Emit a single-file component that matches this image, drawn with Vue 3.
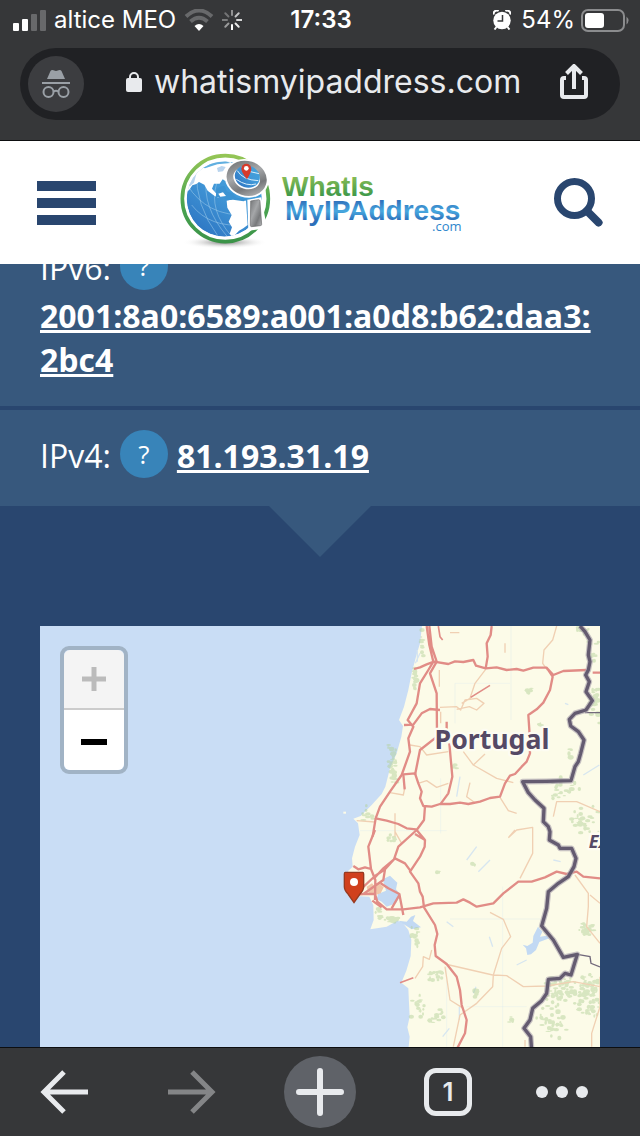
<script setup>
import { ref } from 'vue'

const address = ref('whatismyipaddress.com')

// Woodland areas: centre x, centre y, spread x, spread y, number of patches
const woods = [
  [225, 170, 8, 50, 14], [158, 430, 16, 60, 34], [568, 212, 10, 10, 8], [85, 580, 22, 25, 10],
  [245, 70, 8, 50, 10], [345, 435, 8, 14, 4], [155, 665, 14, 30, 9], [115, 880, 14, 22, 10],
  [155, 900, 30, 10, 14], [225, 950, 18, 35, 14], [290, 1070, 26, 22, 16], [235, 1160, 22, 45, 18],
  [290, 1190, 26, 30, 14], [405, 1120, 14, 16, 8], [740, 925, 26, 30, 24], [660, 1115, 55, 45, 60],
  [740, 1125, 45, 75, 70], [640, 1210, 55, 50, 36], [765, 240, 22, 80, 26], [665, 510, 65, 40, 24],
  [735, 600, 45, 45, 30], [760, 90, 20, 50, 10], [735, 30, 35, 12, 8], [400, 735, 8, 8, 3],
  [297, 755, 7, 9, 3], [600, 312, 10, 6, 3], [515, 1200, 8, 20, 4], [690, 400, 8, 20, 4],
]

let seed = 7
const rand = () => {
  seed = (seed * 16807) % 2147483647
  return seed / 2147483647
}
const patches = woods.flatMap(([x, y, sx, sy, n]) =>
  Array.from({ length: n }, () => ({
    x: Math.round(x + (rand() + rand() - 1) * sx),
    y: Math.round(y + (rand() + rand() - 1) * sy),
    rx: Math.round(3 + rand() * 6),
    ry: Math.round(2 + rand() * 5),
  }))
)

const spokes = [1, 0.5, 0.35, 0.3, 0.45, 0.7, 0.8, 0.9]
</script>

<template>
  <div class="phone">
    <header class="browser-top">
      <div class="status">
        <div class="status-left">
          <svg class="signal" viewBox="0 0 33 21" width="33" height="21" aria-hidden="true">
            <rect x="0" y="13" width="6" height="8" rx="1" fill="#fff" />
            <rect x="9" y="9" width="6" height="12" rx="1" fill="#fff" />
            <rect x="18" y="4" width="6" height="17" rx="1" fill="#68696b" />
            <rect x="27" y="0" width="6" height="21" rx="1" fill="#68696b" />
          </svg>
          <span class="carrier">altice MEO</span>
          <svg class="wifi" viewBox="0 0 30 22" width="30" height="22" fill="none" aria-hidden="true">
            <path d="M2 7.500Q15-4.500 28 7.500" stroke="#68696b" stroke-width="4" />
            <path d="M6.500 12.500Q15 5 23.500 12.500" stroke="#68696b" stroke-width="4" />
            <path d="M10.500 17Q15 13 19.500 17L15 22Z" fill="#fff" />
          </svg>
          <svg class="spinner" viewBox="-10 -10 20 20" width="20" height="20" aria-hidden="true">
            <line
              v-for="(o, i) in spokes" :key="i" x1="0" y1="5" x2="0" y2="9.500"
              stroke="#fff" stroke-width="2" stroke-linecap="round" :opacity="o" :transform="`rotate(${i * 45})`"
            />
          </svg>
        </div>
        <time class="clock">17:33</time>
        <div class="status-right">
          <svg viewBox="0 0 18 20" width="18" height="20" aria-hidden="true">
            <circle cx="9" cy="10.500" r="8.700" fill="#fff" />
            <path d="M.8 4.600A3.200 3.200 0 0 1 5.600 1M17.200 4.600A3.200 3.200 0 0 0 12.400 1M3.500 17 1.500 19.500M14.500 17l2 2.500" stroke="#fff" stroke-width="2" fill="none" />
            <path d="M9.500 5v6H4.500" stroke="#363739" stroke-width="1.500" fill="none" />
          </svg>
          <span class="percent">54%</span>
          <svg viewBox="0 0 48 23" width="48" height="23" aria-hidden="true">
            <rect x="1" y="1" width="42" height="21" rx="6" fill="none" stroke="#8b8c8e" stroke-width="2" />
            <rect x="4" y="4" width="19" height="15" rx="3" fill="#fff" />
            <path d="M45.500 7.500q4 4 0 8z" fill="#8b8c8e" />
          </svg>
        </div>
      </div>
      <div class="urlbar">
        <span class="incognito">
          <svg viewBox="0 0 28 28" width="28" height="28" aria-hidden="true">
            <path d="M5 9 8.500 1Q9 0 10.500 0L14 1 17.500 0Q19 0 19.500 1L23 9Z" fill="#9aa0a6" />
            <path d="M0 12h28v2H0z" fill="#9aa0a6" />
            <g fill="none" stroke="#9aa0a6" stroke-width="2">
              <circle cx="6.500" cy="22" r="5" /><circle cx="21.500" cy="22" r="5" /><path d="M11.500 21.500q2.500-1.500 5 0" />
            </g>
          </svg>
        </span>
        <svg class="lock" viewBox="0 0 16 20" width="16" height="20" aria-hidden="true">
          <rect y="6" width="16" height="14" rx="2" fill="#e8eaed" />
          <path d="M4 8V5a4 4 0 0 1 8 0v3" stroke="#e8eaed" stroke-width="2" fill="none" />
        </svg>
        <input v-model="address" class="address" type="text" aria-label="Address" />
        <button class="plain" type="button" aria-label="Share">
          <svg viewBox="0 0 28 36" width="28" height="36" fill="none" stroke="#e8eaed" stroke-width="4" aria-hidden="true">
            <path d="M6 14H4Q2 14 2 16V31Q2 33 4 33H24Q26 33 26 31V16Q26 14 24 14H22" />
            <path d="M14 25V3M6.500 9.500 14 2l7.500 7.500" />
          </svg>
        </button>
      </div>
    </header>

    <div class="site-header">
      <button class="plain menu" type="button" aria-label="Menu"><i></i><i></i><i></i></button>
      <a class="logo" href="#">
        <svg viewBox="180 150 290 105" width="290" height="105" role="img" aria-label="What Is My IP Address">
          <defs>
            <linearGradient id="ring" x2="0" y2="1"><stop stop-color="#94c556" /><stop offset=".55" stop-color="#4ba551" /><stop offset="1" stop-color="#3b9348" /></linearGradient>
            <linearGradient id="ocean" x1="1" y1="0" x2=".3" y2="1"><stop stop-color="#43a5dd" /><stop offset=".5" stop-color="#4299d8" /><stop offset="1" stop-color="#2f78c4" /></linearGradient>
            <linearGradient id="metal" x2="1" y2="1"><stop stop-color="#737577" /><stop offset=".4" stop-color="#a5a7a9" /><stop offset=".7" stop-color="#77797b" /><stop offset="1" stop-color="#b5b6b8" /></linearGradient>
            <linearGradient id="leaf" x2="0" y2="1"><stop offset=".2" stop-color="#86bb55" /><stop offset=".8" stop-color="#3f994a" /></linearGradient>
            <linearGradient id="wave" x2="0" y2="1"><stop offset=".2" stop-color="#3073bd" /><stop offset=".52" stop-color="#48a8df" /><stop offset=".82" stop-color="#2c6fba" /></linearGradient>
            <radialGradient id="shade"><stop stop-color="#777" /><stop offset="1" stop-color="#fff" stop-opacity="0" /></radialGradient>
            <clipPath id="globe"><circle cx="163" cy="162" r="113" /></clipPath>
          </defs>
          <g transform="translate(170 145) scale(.3333)">
            <ellipse cx="165" cy="292" rx="128" ry="19" fill="url(#shade)" />
            <circle cx="166" cy="161" r="129" fill="#fff" stroke="url(#ring)" stroke-width="11" />
            <g clip-path="url(#globe)">
              <circle cx="163" cy="162" r="113" fill="url(#ocean)" />
              <g fill="none" stroke="#a8d3ee" stroke-width="1.500">
                <path d="M52 120Q110 215 232 210M65 180Q120 250 225 239M80 80Q75 180 145 275M110 95Q95 185 172 275M140 115Q115 195 186 275" />
              </g>
              <path d="M40 98 90 40 130 52 168 45 200 60 207 85 180 94 166 108 158 103 149 116 132 116 126 131 138 145 146 158 134 153 113 137 103 119 87 111 79 117 67 121 57 136 45 142Z" fill="#fff" />
              <path d="M50 125 62 90 80 83 72 113 60 124ZM141 69l14-6 12 3-8 13-15 2Z" fill="#b9d4ee" />
              <path d="M94 66 126 53 168 49 182 54 142 58 105 70Z" fill="#60afe0" />
              <path d="M170 167 191 161 228 167 233 240 220 250 207 257 188 277 179 266 186 247 176 230 185 210 172 188Z" fill="#fff" />
              <path d="M140 132q15-12 25-8l5 15 17 6 13 13 31 4-10 7-32-5-16 2-21-13-15 5Z" fill="#3c93d2" />
              <path d="M145 146l14-4 9 11-17 2Z" fill="#fff" />
            </g>
            <ellipse cx="230" cy="100" rx="67" ry="57" transform="rotate(18 230 100)" fill="#fff" />
            <path d="M232 164 274 157 291 250 235 257Z" fill="#fff" />
            <ellipse cx="230" cy="100" rx="51" ry="42" transform="rotate(18 230 100)" fill="#fff" stroke="url(#metal)" stroke-width="20" />
            <ellipse cx="232" cy="95" rx="38" ry="33" transform="rotate(18 232 95)" fill="url(#ocean)" />
            <path d="M202 77Q218 105 265 107M215 67Q235 82 267 86M199 103Q230 125 258 117" stroke="#d9effb" stroke-width="3" fill="none" />
            <path d="M231 103Q214 81 214 71A15 15 0 0 1 244 71Q244 81 231 103Z" fill="#d63a2c" />
            <circle cx="229" cy="70" r="7" fill="#fff" />
            <path d="M242 168 266 164Q270 164 270 170L275 238Q275 242 271 242L245 245Q241 245 241 241Z" fill="url(#metal)" stroke="#696b6d" stroke-width="2" />
          </g>
          <g font-family="'Liberation Sans', Arial, sans-serif" font-weight="700" font-size="28">
            <text x="282" y="196" fill="url(#leaf)">WhatIs</text>
            <text x="285" y="220" fill="url(#wave)">MyIPAddress</text>
          </g>
          <text x="432" y="231" font-family="'Open Sans', sans-serif" font-size="13" fill="#2f86cc">.com</text>
        </svg>
      </a>
      <button class="plain" type="button" aria-label="Search">
        <svg viewBox="0 0 49 49" width="49" height="49" fill="none" stroke="#29466f" aria-hidden="true">
          <circle cx="20.500" cy="20.500" r="17" stroke-width="7" />
          <path d="M33 33 44.500 44.500" stroke-width="8" stroke-linecap="round" />
        </svg>
      </button>
    </div>

    <main class="page">
      <section class="ips">
        <div class="ip ip-six">
          <span class="name">IPv6:</span>
          <button class="help" type="button" aria-label="About IPv6">?</button>
          <a class="value" href="#">2001:8a0:6589:a001:a0d8:b62:daa3:<wbr />2bc4</a>
        </div>
        <div class="ip">
          <span class="name">IPv4:</span>
          <button class="help" type="button" aria-label="About IPv4">?</button>
          <a class="value" href="#">81.193.31.19</a>
        </div>
      </section>
      <div class="pointer"></div>
      <section class="map">
        <svg class="tiles" viewBox="-900 18 1680 1263" preserveAspectRatio="xMidYMin slice" role="img" aria-label="Map of Portugal">
          <rect x="-900" y="0" width="1700" height="1300" fill="#c9ddf5" />
          <path fill="#fcfbe8" d="M248 0 240 70 228 110 215 160 205 210 192 260 177 300 189 318 184 350 170 400 150 445 136 500 125 522 95 555 62 588 40 596 54 610 59 645 45 680 36 715 38 740 25 752 18 780 22 824 50 828 88 830 100 856 101 900 91 928 140 920 172 902 188 908 205 930 214 960 212 1008 199 1052 184 1088 205 1105 207 1150 209 1190 202 1222 209 1250 204 1300H800V0Z" />
          <path fill="#fcfbe8" d="M10 575h8v6h-8z" />
          <g fill="#c2d9f3">
            <path d="M128 778 150 767 172 788 168 808 182 825 168 850 140 860 125 845 110 838 114 822 138 812Z" />
            <path d="M175 902 200 905 213 890 226 885 219 903 243 922 215 928 190 912Z" />
            <path d="M594 920 607 935 600 950 620 947 628 955 598 966 588 990 573 1003 562 1005 558 985 548 974 562 978 578 968 580 948Z" />
          </g>
          <g fill="none" stroke="#d7e6f0" stroke-width="4">
            <path d="M232 90v35M240 100l-14 30M360 470 350 530M410 680 380 720M450 720 415 755M340 920 320 905M358 1160v40M328 1225l-20 25M448 950l10 30M640 720l22 5M675 250l10 4M730 465 778 435M560 1020l-30 15M408 1100l-8 20" />
            <path d="M345 190H510M513 18V300M345 190V310M60 632H320M302 475V640M330 897H600M320 1030V1280M488 800V1280M380 1160H560" stroke-width="1" />
          </g>
          <g fill="#b5d39b" opacity=".5">
            <ellipse v-for="(p, i) in patches" :key="i" :cx="p.x" :cy="p.y" :rx="p.rx" :ry="p.ry" />
          </g>
          <g fill="none" stroke="#f0d0b3" stroke-width="4" stroke-linejoin="round">
            <path d="M650 18 638 60 612 90 608 130 622 150M330 38h28M495 70v28M298 150v50M437 148 405 190 390 235 365 250M300 262 350 260 362 270 375 240 410 235 432 250 410 270 388 260 350 268M302 275V310M210 375 240 380 260 405 325 395M370 395 400 435 435 402M400 435 470 475 520 488M235 490 260 482 290 502 325 490M390 488 380 530 405 548M150 518 190 525 195 500M480 532 505 572 530 580M50 602 105 606M165 580V650M505 653 530 630 578 622 578 700 540 775M505 653 525 630M640 590 650 545 710 545 780 575M165 635 185 670" />
            <path d="M450 877 490 898 512 950 485 985 460 1065 458 1100 410 1150 360 1185 340 1280M458 1065 500 1067 550 1100 620 1098 700 1085 780 1100M315 1032 458 1065M275 990 268 1018 250 1010 248 1040 225 1075M315 1040 330 1140 370 1165M555 1280V1260M705 765 745 820 745 860 740 920 780 970M750 825 780 850M780 1070V1160L755 1240V1280" />
          </g>
          <path fill="#edbd9d" opacity=".85" d="M80 800 96 790 103 798 116 790 131 802 122 820 105 826 86 820Z" />
          <g fill="none" stroke="#e18c86" stroke-width="7" stroke-linejoin="round">
            <path d="M260 18 268 75 280 125 265 150 240 190 230 250 203 300 220 320 205 355 210 395 185 465 150 515 120 560 107 595 98 650M268 18 275 80 290 125 270 160 290 220 291 350 240 390 225 465" />
            <path d="M455 18 452 45 440 70 443 110 437 145M222 147 240 142 260 133 282 125 325 132 345 124 370 126 400 120 408 137 437 145 470 142 500 150 530 147 550 152 580 143 620 143 638 170 630 210 610 248 590 268 565 285 568 330 570 400 560 425 545 440 525 462 510 467 495 490 480 530 450 534 420 545 385 552 360 548 330 552 300 552 275 560 250 558 240 535 245 515 235 490 225 460 190 463 194 508M620 143 640 165 670 153 740 150M758 158H780" />
            <path d="M192 315 220 314 245 280 270 267 300 270M320 305V340M328 370 337 470 325 520 303 550M255 558 252 600 230 630 175 680 162 718 130 745 100 778M107 595 140 602 175 612 200 625 228 628 255 660M225 642 255 660 254 680 240 710 210 755 235 790 240 815 248 830 252 862 285 915 292 942 284 975 287 1008 320 1032 350 1070 360 1110 365 1155 380 1200 375 1240 350 1288M105 630 85 680 93 747 106 780 105 840M40 738 55 748 75 742 93 747M62 808 105 768 135 748 165 715 195 730 213 755M135 748 130 780 70 822 45 824M70 822H105L112 845 140 868 190 868 240 862 280 850 350 848 370 838 390 848 410 860 460 850 490 820 535 785 575 785 615 772 650 755 680 762 710 755 730 770 780 775M122 790 145 805 178 822 190 885M178 825 155 865M97 842 125 862" />
            <path d="M392 232 450 196M180 1088 220 1073M295 18 300 50 308 60" stroke-width="5" />
          </g>
          <path fill="none" stroke="#72697b" stroke-width="4" d="M735 278H780M712 1003 750 1010 753 1030 780 1041" />
          <path fill="none" stroke="#aaa3ae" opacity=".65" stroke-width="17" stroke-linejoin="round" d="M720 18 735 35 750 60 745 105 750 125 745 150 737 165 748 185 738 215 757 242 738 270 705 280 688 298 692 318 715 335 732 360 722 400 715 425 705 440 693 482 620 484 548 485 565 518 585 540 612 565 610 605 625 620 630 635 628 660 655 675 660 685 695 685 708 715 702 740 685 770 655 790 625 815 620 865 605 918 640 960 670 1012 712 1003 693 1065 675 1060 660 1075 625 1078 620 1120 605 1142 578 1165 570 1200 552 1225 572 1250 575 1290" />
          <path fill="none" stroke="#645b70" stroke-width="10" stroke-linejoin="round" d="M720 18 735 35 750 60 745 105 750 125 745 150 737 165 748 185 738 215 757 242 738 270 705 280 688 298 692 318 715 335 732 360 722 400 715 425 705 440 693 482 620 484 548 485 565 518 585 540 612 565 610 605 625 620 630 635 628 660 655 675 660 685 695 685 708 715 702 740 685 770 655 790 625 815 620 865 605 918 640 960 670 1012 712 1003 693 1065 675 1060 660 1075 625 1078 620 1120 605 1142 578 1165 570 1200 552 1225 572 1250 575 1290" />
          <g font-family="'Noto Sans', 'Open Sans', sans-serif" font-weight="700" fill="#554965" stroke="#fdfcf2" stroke-width="14" stroke-linejoin="round" paint-order="stroke">
            <text x="456" y="387" font-size="80" text-anchor="middle">Portugal</text>
            <text x="746" y="685" font-size="54" font-style="italic">Ex</text>
          </g>
          <path d="M16 757H68Q71 757 71 762V800Q71 810 60 822L42 848 24 822Q13 810 13 800V762Q13 757 16 757Z" fill="#d0401d" stroke="#973a20" stroke-width="4" />
          <circle cx="42" cy="786" r="12" fill="#fff" />
        </svg>
        <div class="zoom">
          <button type="button" disabled aria-label="Zoom in">
            <svg viewBox="0 0 24 24" width="24" height="24" aria-hidden="true"><path d="M12 0v24M0 12h24" stroke="#bbb" stroke-width="5" /></svg>
          </button>
          <button type="button" aria-label="Zoom out">
            <svg viewBox="0 0 26 24" width="26" height="24" aria-hidden="true"><path d="M0 14h26" stroke="#000" stroke-width="6" /></svg>
          </button>
        </div>
      </section>
    </main>

    <nav class="toolbar" aria-label="Browser">
      <button type="button" aria-label="Back">
        <svg viewBox="0 0 48 44" width="48" height="44" fill="none" stroke="#e8eaed" stroke-width="5" aria-hidden="true"><path d="M48 22H4M24 2 4 22l20 20" /></svg>
      </button>
      <button type="button" aria-label="Forward" disabled>
        <svg viewBox="0 0 48 44" width="48" height="44" fill="none" stroke="#848587" stroke-width="5" aria-hidden="true"><path d="M0 22h44M24 2l20 20-20 20" /></svg>
      </button>
      <button type="button" aria-label="New tab">
        <span class="new">
          <svg viewBox="0 0 48 48" width="48" height="48" aria-hidden="true"><path d="M24 3v42M3 24h42" stroke="#e8eaed" stroke-width="6" stroke-linecap="round" /></svg>
        </span>
      </button>
      <button type="button" aria-label="1 open tab"><span class="tabs">1</span></button>
      <button class="more" type="button" aria-label="More">
        <svg viewBox="0 0 52 12" width="52" height="12" fill="#e8eaed" aria-hidden="true"><circle cx="6" cy="6" r="6" /><circle cx="26" cy="6" r="6" /><circle cx="46" cy="6" r="6" /></svg>
      </button>
    </nav>
  </div>
</template>

<style>
body {
  margin: 0;
  background: #363739;
}
</style>

<style scoped>
.phone {
  display: flex;
  flex-direction: column;
  height: 100vh;
  overflow: hidden;
  background: #29466f;
  color: #fff;
  font-family: Inter, Roboto, sans-serif;
}
button {
  padding: 0;
  border: 0;
  font: inherit;
  color: inherit;
  cursor: pointer;
}
svg {
  display: block;
  flex: none;
}
.plain {
  background: none;
}
.browser-top {
  flex: none;
  padding-bottom: 20px;
  border-bottom: 1px solid #0d0e10;
  background: #363739;
}
.status {
  display: grid;
  grid-template-columns: 1fr auto 1fr;
  align-items: center;
  height: 40px;
  margin-bottom: 8px;
  padding: 0 11px 0 13px;
  font-size: 24px;
  line-height: 40px;
}
.status-left,
.status-right {
  display: flex;
  align-items: center;
}
.status-left {
  gap: 8px;
}
.status-right {
  justify-content: flex-end;
  gap: 6px;
}
.percent {
  margin-left: 4px;
}
.clock {
  font-weight: 600;
}
.urlbar {
  display: flex;
  align-items: center;
  height: 72px;
  margin: 0 20px;
  padding: 0 32px 4px 8px;
  box-sizing: border-box;
  border-radius: 36px;
  background: #202124;
}
.incognito {
  display: grid;
  place-items: center;
  flex: none;
  width: 56px;
  height: 56px;
  margin-top: 4px;
  border-radius: 50%;
  background: #3c3d40;
}
.lock {
  margin: 0 12px 0 42px;
}
.address {
  flex: 1;
  min-width: 0;
  padding: 0;
  border: 0;
  outline: 0;
  background: none;
  color: #e8eaed;
  font: 400 32px/48px Inter, Roboto, sans-serif;
}
.site-header {
  display: flex;
  flex: none;
  align-items: center;
  justify-content: space-between;
  height: 123px;
  padding: 0 37px;
  background: #fff;
}
.menu {
  display: grid;
  gap: 7px;
}
.menu i {
  width: 59px;
  height: 10px;
  background: #29466f;
}
.page {
  display: flex;
  flex: 1;
  flex-direction: column;
  min-height: 0;
  overflow: hidden;
  font-family: "Open Sans", "Noto Sans", sans-serif;
}
.ips {
  flex: none;
  margin-top: -42px;
}
.ip {
  display: flex;
  flex-wrap: wrap;
  align-items: flex-end;
  gap: 4px 9px;
  padding: 20px 40px 28px;
  background: #37587d;
  font-size: 32px;
  line-height: 44px;
}
.ip-six {
  padding-bottom: 24px;
  border-bottom: 4px solid #29466f;
}
.help {
  width: 48px;
  height: 48px;
  border-radius: 50%;
  background: #3884b9;
  font-size: 26px;
  line-height: 48px;
}
.value {
  color: #fff;
  font-weight: 700;
  text-decoration: underline;
}
.pointer {
  flex: none;
  align-self: center;
  width: 102px;
  height: 51px;
  background: #37587d;
  clip-path: polygon(0 0, 100% 0, 50% 100%);
}
.map {
  position: relative;
  flex: 1;
  min-height: 0;
  margin: 69px 40px 0;
  overflow: hidden;
  background: #c9ddf5;
}
.tiles {
  width: 100%;
  height: 100%;
}
.zoom {
  position: absolute;
  top: 20px;
  left: 20px;
  display: grid;
  border: 4px solid #a1b3c5;
  border-radius: 9px;
}
.zoom button {
  display: grid;
  place-items: center;
  width: 60px;
  height: 60px;
  box-sizing: border-box;
  border-radius: 0 0 6px 6px;
  background: #fff;
}
.zoom button:first-child {
  border-bottom: 2px solid #ccc;
  border-radius: 6px 6px 0 0;
  background: #f4f4f4;
}
.toolbar {
  display: grid;
  flex: none;
  grid-template-columns: repeat(5, 1fr);
  height: 88px;
  border-top: 1px solid #0d0e10;
  background: #363739;
}
.toolbar button {
  display: flex;
  align-items: center;
  justify-content: center;
  background: none;
}
.toolbar .more {
  justify-content: flex-start;
  padding-left: 24px;
}
.new {
  display: grid;
  place-items: center;
  width: 72px;
  height: 72px;
  border-radius: 50%;
  background: #5f6268;
}
.tabs {
  width: 48px;
  height: 48px;
  box-sizing: border-box;
  border: 5px solid #e8eaed;
  border-radius: 12px;
  color: #e8eaed;
  font-size: 26px;
  font-weight: 600;
  line-height: 38px;
}
</style>
